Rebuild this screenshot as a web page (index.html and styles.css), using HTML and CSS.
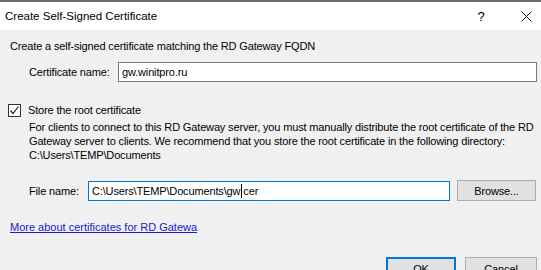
FILE: index.html
```html
<!DOCTYPE html>
<html>
<head>
<meta charset="utf-8">
<link rel="stylesheet" href="styles.css">
</head>
<body>
<div class="dialog">
  <div class="titlebar">
    <span class="title">Create Self-Signed Certificate</span>
    <span class="tb-help">?</span>
    <span class="tb-close"><svg width="11" height="11" viewBox="0 0 11 11"><path d="M0.5 0.5 L10.5 10.5 M10.5 0.5 L0.5 10.5" stroke="#111" stroke-width="1" fill="none"/></svg></span>
  </div>
  <div class="content">
    <div class="intro">Create a self-signed certificate matching the RD Gateway FQDN</div>
    <div class="row cert-row">
      <span class="label">Certificate name:</span>
      <div class="input cert-input">gw.winitpro.ru</div>
    </div>
    <div class="check-row">
      <span class="checkbox"><svg width="11" height="11" viewBox="0 0 11 11"><path d="M1.5 5.5 L4 8.5 L9.5 1.5" stroke="#222" stroke-width="1.2" fill="none"/></svg></span>
      <span class="check-label">Store the root certificate</span>
    </div>
    <div class="para">For clients to connect to this RD Gateway server, you must manually distribute the root certificate of the RD Gateway server to clients. We recommend that you store the root certificate in the following directory:<br>C:\Users\TEMP\Documents</div>
    <div class="row file-row">
      <span class="label file-label">File name:</span>
      <div class="input file-input">C:\Users\TEMP\Documents\gw<span class="caret"></span>cer</div>
      <div class="btn browse">Browse...</div>
    </div>
    <div class="link-row"><a class="link">More about certificates for RD Gatewa</a></div>
    <div class="buttons">
      <div class="btn ok">OK</div>
      <div class="btn cancel">Cancel</div>
    </div>
  </div>
</div>
</body>
</html>
```
FILE: styles.css
```css
html, body {
  margin: 0;
  padding: 0;
  background: #f0f0f0;
  overflow: hidden;
}
.dialog {
  width: 541px;
  height: 270px;
  overflow: hidden;
  border-top: 2px solid #6f6f6f;
  box-sizing: border-box;
  font-family: "Liberation Sans", Arial, sans-serif;
  font-size: 11px;
  letter-spacing: -0.15px;
  color: #000;
}
.titlebar {
  height: 28px;
  background: #fff;
  display: flex;
  align-items: center;
  font-size: 11.5px;
  letter-spacing: 0;
}
.title {
  padding-left: 5px;
  flex: 1;
}
.tb-help {
  width: 12px;
  text-align: center;
  margin-right: 34px;
  font-size: 13px;
}
.tb-close {
  display: flex;
  margin-right: 9px;
}
.content {
  padding: 9px 4px 0 10px;
}
.intro {
  height: 14px;
  line-height: 14px;
}
.row {
  display: flex;
  align-items: center;
}
.cert-row {
  margin-top: 9px;
}
.label {
  padding-left: 19px;
  width: 108px;
  box-sizing: border-box;
  white-space: nowrap;
  flex-shrink: 0;
}
.input {
  background: #fff;
  border: 1px solid #7a7a7a;
  height: 20px;
  box-sizing: border-box;
  line-height: 18px;
  padding-left: 3px;
  white-space: nowrap;
  display: flex;
  align-items: center;
}
.cert-input {
  flex: 1;
}
.check-row {
  margin-top: 21px;
  display: flex;
  align-items: center;
  height: 14px;
}
.checkbox {
  width: 13px;
  height: 13px;
  border: 1px solid #333;
  background: #fff;
  box-sizing: border-box;
  margin-left: -2px;
  display: flex;
  align-items: center;
  justify-content: center;
}
.check-label {
  margin-left: 7px;
}
.para {
  margin-top: 3px;
  padding-left: 19px;
  line-height: 14px;
  margin-right: -2px;
}
.file-row {
  margin-top: 18px;
}
.file-label {
  width: 78px;
}
.file-input {
  width: 362px;
  border-color: #0078d7;
}
.caret {
  display: inline-block;
  width: 1px;
  height: 14px;
  background: #000;
  margin: 0 1px 0 1px;
}
.btn {
  background: #e1e1e1;
  border: 1px solid #adadad;
  box-sizing: border-box;
  height: 21px;
  display: flex;
  align-items: center;
  justify-content: center;
  flex-shrink: 0;
}
.browse {
  width: 79px;
  margin-left: 7px;
}
.link-row {
  margin-top: 19px;
  height: 14px;
  line-height: 14px;
}
.link {
  color: #1a1acc;
  text-decoration: underline;
  letter-spacing: 0;
}
.buttons {
  margin-top: 23px;
  display: flex;
  justify-content: flex-end;
  gap: 9px;
}
.ok {
  width: 70px;
  height: 23px;
  border: 2px solid #0078d7;
}
.cancel {
  width: 72px;
  height: 23px;
}
```
